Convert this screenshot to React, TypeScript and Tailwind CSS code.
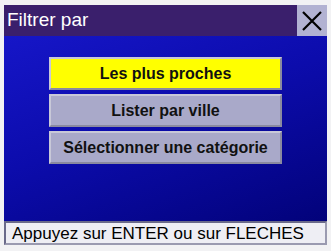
export default function App() {
  const items = [
    { label: "Les plus proches", active: true },
    { label: "Lister par ville", active: false },
    { label: "Sélectionner une catégorie", active: false },
  ];

  return (
    <div className="flex h-[251px] w-[331px] bg-[#f2f2f4] p-[4px] pt-[5px] pb-[6px] font-['Liberation_Sans',Arial,sans-serif]">
      <div className="flex flex-1 flex-col">
        <div className="flex h-[31px] items-stretch bg-[#3a1f6c]">
          <div className="flex-1 pl-[3px] pt-[3px] text-[19px] leading-[24px] text-white">Filtrer par</div>
          <div className="flex w-[30px] items-center justify-center bg-[#b2b2d2]">
            <svg width="24" height="24" viewBox="0 0 24 24">
              <path d="M3 3 L21 21 M21 3 L3 21" stroke="#000" strokeWidth="2.2" />
            </svg>
          </div>
        </div>
        <div className="flex flex-1 flex-col gap-[4px] bg-[linear-gradient(160deg,#1616c8_0%,#0c0cac_45%,#02027a_100%)] px-[45px] pt-[21px]">
          {items.map((it) => (
            <div
              key={it.label}
              className={`flex h-[33px] items-center justify-center border-2 border-t-[#c8c8d8] border-l-[#c8c8d8] border-r-[#8a8aa0] border-b-[#8a8aa0] text-[16px] font-bold text-[#111] ${
                it.active ? "bg-[#ffff00]" : "bg-[#a9a9c9]"
              }`}
            >
              {it.label}
            </div>
          ))}
        </div>
        <div className="flex h-[24px] items-center border-2 border-t-[#6a6a8a] border-l-[#6a6a8a] border-r-[#9a9ab0] border-b-[#9a9ab0] bg-[#eeeef4] pl-[6px] text-[17px] leading-none text-black">
          Appuyez sur ENTER ou sur FLECHES
        </div>
      </div>
    </div>
  );
}
